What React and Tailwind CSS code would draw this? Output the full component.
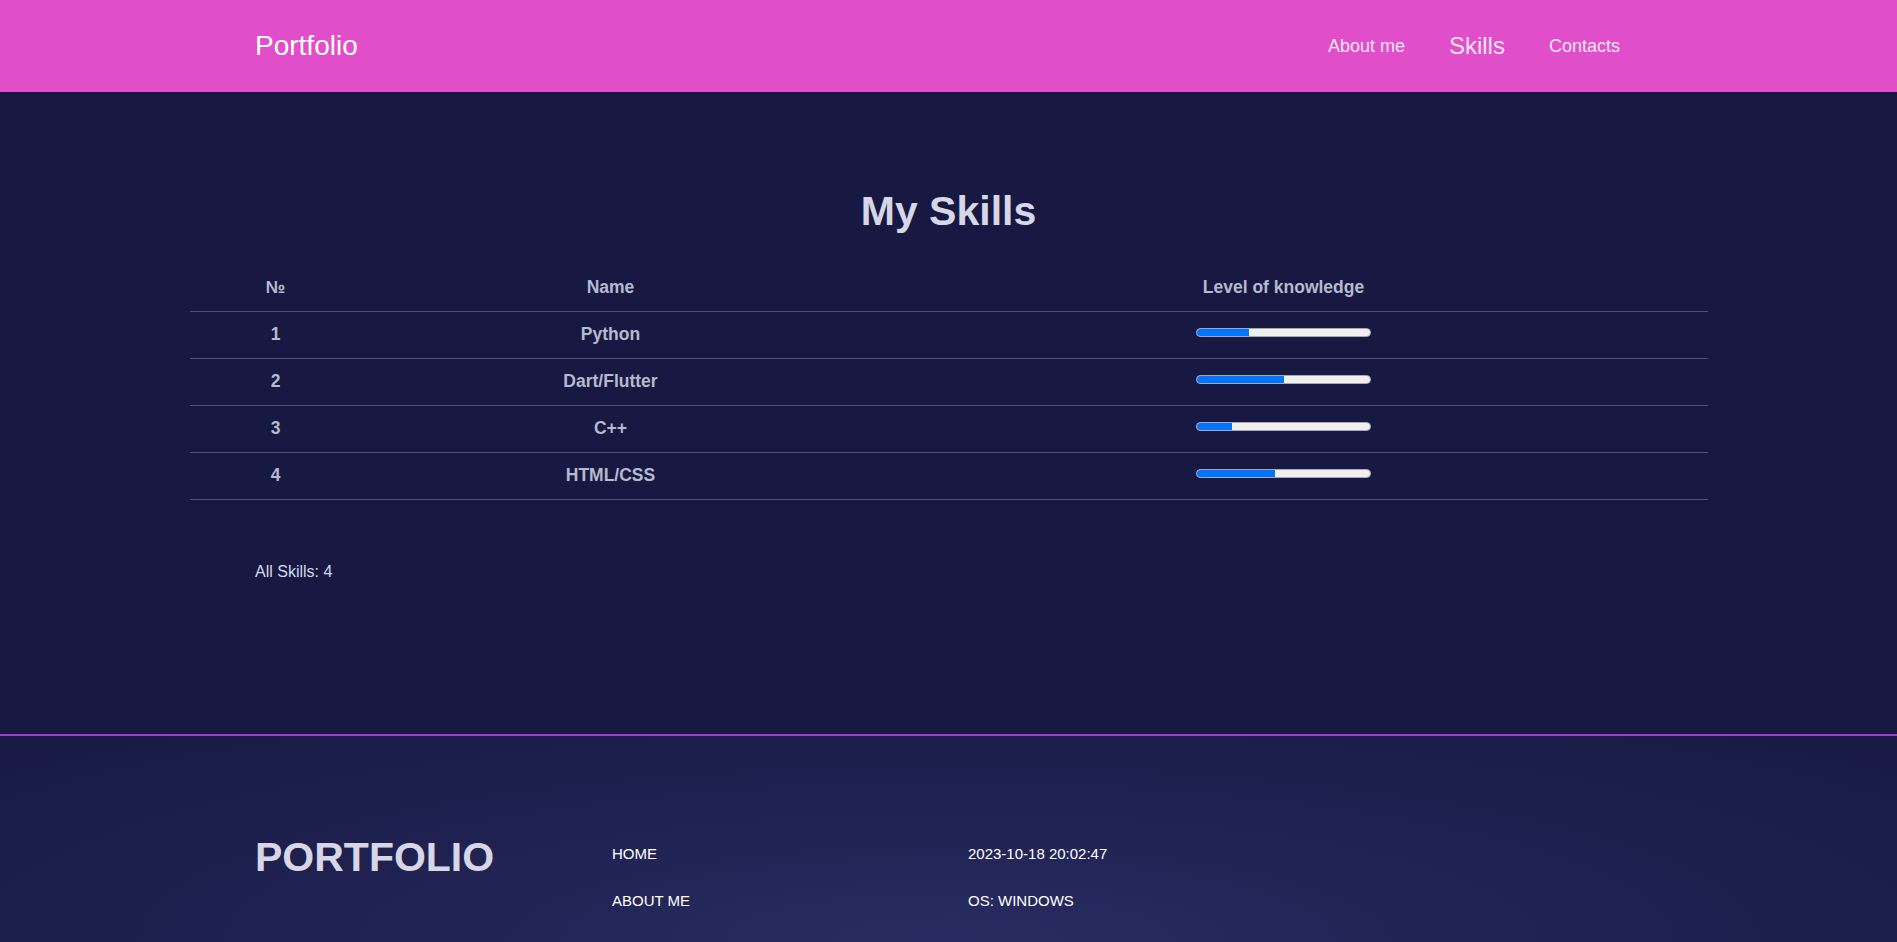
import React from "react";

const skills = [
  { id: 1, name: "Python", level: 30 },
  { id: 2, name: "Dart/Flutter", level: 50 },
  { id: 3, name: "C++", level: 20 },
  { id: 4, name: "HTML/CSS", level: 45 },
];

function Bar({ value }) {
  return (
    <div className="mx-auto mb-[4px] h-[9px] w-[175px] overflow-hidden rounded-full border border-[#a7a7b2] bg-[#efefef]">
      <div className="h-full bg-[#0075ff]" style={{ width: `${value}%` }} />
    </div>
  );
}

export default function App() {
  return (
    <div className="min-h-screen bg-[#171942] font-['Liberation_Sans',Arial,sans-serif]">
      <header className="h-[92px] bg-[#e04fc9]">
        <div className="mx-auto flex h-full w-[1387px] items-center justify-between">
          <span className="text-[28px] text-white">Portfolio</span>
          <nav className="flex items-center">
            <a className="px-[22px] text-[18px] text-[#fbe3f6]">About me</a>
            <a className="px-[22px] text-[24px] text-[#fbe3f6]">Skills</a>
            <a className="px-[22px] text-[18px] text-[#fbe3f6]">Contacts</a>
          </nav>
        </div>
      </header>

      <main className="pt-[96px] pb-[153px]">
        <h1 className="text-center text-[41px] font-bold leading-[46px] text-[#d6d6e6]">My Skills</h1>
        <table className="mx-auto mt-[30px] w-[1518px] border-collapse text-[17.5px] font-bold text-[#b4bbcc]">
          <thead>
            <tr className="h-[47px] border-b border-[#4b5579]">
              <th className="w-[172px] text-center">№</th>
              <th className="w-[498px] text-center">Name</th>
              <th className="text-center">Level of knowledge</th>
            </tr>
          </thead>
          <tbody>
            {skills.map((s) => (
              <tr key={s.id} className="h-[47px] border-b border-[#4b5579]">
                <td className="text-center">{s.id}</td>
                <td className="text-center">{s.name}</td>
                <td>
                  <div className="flex items-center justify-center">
                    <Bar value={s.level} />
                  </div>
                </td>
              </tr>
            ))}
          </tbody>
        </table>
        <div className="mx-auto mt-[63px] w-[1387px] text-[16px] leading-[18px] text-[#d3d9ef]">All Skills: 4</div>
      </main>

      <footer className="h-[412px] border-t-2 border-[#9a3fc8] bg-[radial-gradient(ellipse_at_center,#282c62_0%,#1f2150_50%,#181a45_100%)]">
        <div className="mx-auto grid w-[1387px] grid-cols-[357px_356px_1fr] pt-[98px]">
          <div className="text-[41px] font-bold leading-[47px] text-[#d6d6e6]">PORTFOLIO</div>
          <ul className="mt-[11px] flex flex-col gap-[30px] text-[15px] leading-[17px] text-white">
            <li>HOME</li>
            <li>ABOUT ME</li>
          </ul>
          <ul className="mt-[11px] flex flex-col gap-[30px] text-[15px] leading-[17px] text-white">
            <li>2023-10-18 20:02:47</li>
            <li>OS: WINDOWS</li>
          </ul>
        </div>
      </footer>
    </div>
  );
}
